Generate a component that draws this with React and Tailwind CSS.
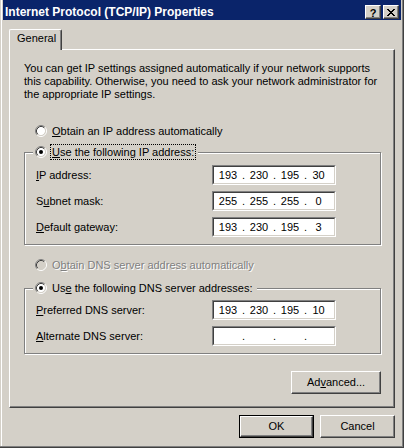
import React from "react";

function Radio({ checked, disabled }) {
  return (
    <svg width="12" height="12" viewBox="0 0 12 12" className="shrink-0">
      <circle cx="6" cy="6" r="4.2" fill={disabled ? "#d4d0c8" : "#ffffff"} />
      <path d="M2.11 9.89A5.5 5.5 0 0 1 9.89 2.11" stroke="#808080" fill="none" />
      <path d="M9.89 2.11A5.5 5.5 0 0 1 2.11 9.89" stroke="#ffffff" fill="none" />
      <path d="M2.82 9.18A4.5 4.5 0 0 1 9.18 2.82" stroke="#404040" fill="none" />
      <path d="M9.18 2.82A4.5 4.5 0 0 1 2.82 9.18" stroke="#d4d0c8" fill="none" />
      {checked && <circle cx="6" cy="6" r="2" fill={disabled ? "#808080" : "#000000"} />}
    </svg>
  );
}

function IpBox({ parts }) {
  const p = parts || ["", "", "", ""];
  return (
    <div className="w-[124px] h-[20px] bg-white border border-t-[#808080] border-l-[#808080] border-b-white border-r-white">
      <div className="h-full border border-t-[#404040] border-l-[#404040] border-b-[#d4d0c8] border-r-[#d4d0c8] flex items-center pl-[1px] leading-[13px]">
        <span className="w-[26px] text-center">{p[0]}</span>
        <span className="w-[5px] text-center">.</span>
        <span className="w-[26px] text-center">{p[1]}</span>
        <span className="w-[5px] text-center">.</span>
        <span className="w-[26px] text-center">{p[2]}</span>
        <span className="w-[5px] text-center">.</span>
        <span className="w-[21px] text-center">{p[3]}</span>
      </div>
    </div>
  );
}

function Row({ label, parts }) {
  return (
    <div className="h-[20px] flex items-center pl-[11px]">
      <span className="w-[176px] leading-[13px]">{label}</span>
      <IpBox parts={parts} />
    </div>
  );
}

function Raised({ children, className }) {
  return (
    <div
      className={
        "h-full w-full flex items-center justify-center border border-t-white border-l-white border-r-[#404040] border-b-[#404040] shadow-[inset_-1px_-1px_0_#808080] leading-[13px] " +
        (className || "")
      }
    >
      {children}
    </div>
  );
}

function TitleButton({ children }) {
  return (
    <div className="w-[16px] h-[14px] bg-[#d4d0c8]">
      <div className="h-full w-full flex items-center justify-center border border-t-white border-l-white border-r-[#404040] border-b-[#404040] shadow-[inset_-1px_-1px_0_#808080]">
        {children}
      </div>
    </div>
  );
}

export default function App() {
  return (
    <div className="w-[404px] h-[448px] bg-[#d4d0c8] flex flex-col text-[11px] text-black font-['Liberation_Sans',Arial,sans-serif] shadow-[inset_-1px_-1px_0_#404040,inset_-2px_-2px_0_#808080,inset_1px_0_0_#d4d0c8,inset_2px_0_0_#ffffff] overflow-hidden">
      {/* Title bar */}
      <div className="mx-[3px] h-[20px] bg-[#0a246a] flex items-center pt-[4px] pl-[2px] pr-[2px]">
        <span className="flex-1 text-white font-bold text-[12px] leading-[14px] whitespace-nowrap">
          Internet Protocol (TCP/IP) Properties
        </span>
        <div className="flex gap-[2px]">
          <TitleButton>
            <span className="font-bold text-[11px] leading-[10px] text-black pt-[1px]">?</span>
          </TitleButton>
          <TitleButton>
            <svg width="8" height="7" viewBox="0 0 8 7" shapeRendering="crispEdges">
              <path
                d="M0 0h2v1h-2zM6 0h2v1h-2zM1 1h2v1h-2zM5 1h2v1h-2zM2 2h4v1h-4zM3 3h2v1h-2zM2 4h4v1h-4zM1 5h2v1h-2zM5 5h2v1h-2zM0 6h2v1h-2zM6 6h2v1h-2z"
                fill="#000"
              />
            </svg>
          </TitleButton>
        </div>
      </div>

      {/* Tab strip */}
      <div className="mt-[9px] mx-[9px] flex">
        <div className="relative z-10 w-[53px] h-[21px] -mb-[1px] bg-[#d4d0c8] border-l border-t border-white border-r border-r-[#404040] rounded-tr-[2px] rounded-tl-[2px] shadow-[inset_-1px_0_0_#808080] pl-[7px] pt-[2px] leading-[13px]">
          General
        </div>
      </div>

      {/* Panel */}
      <div className="mx-[9px] h-[359px] border border-t-white border-l-white border-r-[#404040] border-b-[#404040] shadow-[inset_-1px_-1px_0_#808080] flex flex-col">
        <p className="mt-[12px] ml-[14px] leading-[13px] whitespace-nowrap">
          You can get IP settings assigned automatically if your network supports
          <br />
          this capability. Otherwise, you need to ask your network administrator for
          <br />
          the appropriate IP settings.
        </p>

        <div className="mt-[23px] ml-[25px] h-[14px] flex items-center gap-[3px]">
          <Radio />
          <span className="px-[2px] leading-[13px]">
            <u>O</u>btain an IP address automatically
          </span>
        </div>

        {/* Group 1 */}
        <div className="mt-[14px] ml-[14px] w-[357px] h-[93px] border border-[#808080] shadow-[inset_1px_1px_0_#ffffff,1px_1px_0_#ffffff] flex flex-col">
          <div className="-mt-[9px] ml-[8px] px-[2px] h-[16px] bg-[#d4d0c8] self-start flex items-center gap-[3px]">
            <Radio checked />
            <span className="h-full flex items-center border border-dotted border-black px-[1px] leading-[13px]">
              <span>
                <u>U</u>se the following IP address:
              </span>
            </span>
          </div>
          <div className="mt-[5px] flex flex-col gap-[6px]">
            <Row label={<><u>I</u>P address:</>} parts={["193", "230", "195", "30"]} />
            <Row label={<>S<u>u</u>bnet mask:</>} parts={["255", "255", "255", "0"]} />
            <Row label={<><u>D</u>efault gateway:</>} parts={["193", "230", "195", "3"]} />
          </div>
        </div>

        <div className="mt-[13px] ml-[25px] h-[14px] flex items-center gap-[3px]">
          <Radio disabled />
          <span className="px-[2px] leading-[13px] text-[#808080] [text-shadow:1px_1px_0_#ffffff]">
            O<u>b</u>tain DNS server address automatically
          </span>
        </div>

        {/* Group 2 */}
        <div className="mt-[16px] ml-[14px] w-[357px] h-[66px] border border-[#808080] shadow-[inset_1px_1px_0_#ffffff,1px_1px_0_#ffffff] flex flex-col">
          <div className="-mt-[9px] ml-[8px] px-[2px] h-[16px] bg-[#d4d0c8] self-start flex items-center gap-[3px]">
            <Radio checked />
            <span className="h-full flex items-center border border-transparent px-[1px] leading-[13px]">
              <span>
                Us<u>e</u> the following DNS server addresses:
              </span>
            </span>
          </div>
          <div className="mt-[4px] flex flex-col gap-[6px]">
            <Row label={<><u>P</u>referred DNS server:</>} parts={["193", "230", "195", "10"]} />
            <Row label={<><u>A</u>lternate DNS server:</>} parts={["", "", "", ""]} />
          </div>
        </div>

        <div className="mt-[17px] mr-[13px] self-end w-[90px] h-[23px]">
          <Raised>
            Ad<u>v</u>anced...
          </Raised>
        </div>
      </div>

      {/* Bottom buttons */}
      <div className="mt-[7px] pr-[9px] flex justify-end gap-[6px]">
        <div className="w-[75px] h-[23px] border border-black">
          <Raised>OK</Raised>
        </div>
        <div className="w-[75px] h-[23px]">
          <Raised>Cancel</Raised>
        </div>
      </div>
    </div>
  );
}
